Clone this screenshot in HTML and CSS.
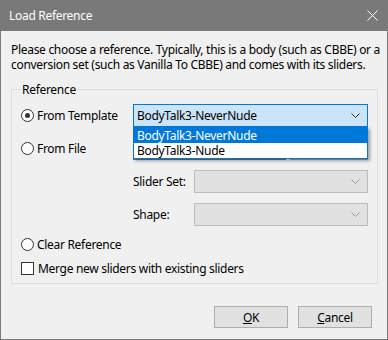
FILE: index.html
```html
<!DOCTYPE html>
<html lang="en">
<head>
  <meta charset="UTF-8" />
  <title>Load Reference</title>
  <link rel="stylesheet" href="styles.css">
</head>
<body>
  <div class="dialog">
    <div class="titlebar">
      <span class="title">Load Reference</span>
      <svg class="close" width="11" height="11" viewBox="0 0 11 11">
        <path d="M0.5 0.5 L10.5 10.5 M10.5 0.5 L0.5 10.5" stroke="#fff" stroke-width="1" fill="none"/>
      </svg>
    </div>

    <div class="content">
      <p class="intro">Please choose a reference. Typically, this is a body (such as CBBE) or a<br>conversion set (such as Vanilla To CBBE) and comes with its sliders.</p>

      <fieldset class="group">
        <legend>Reference</legend>

        <div class="row">
          <label class="radio"><span class="dot checked"></span>From Template</label>
          <div class="combo active">
            <span>BodyTalk3-NeverNude</span>
            <svg class="chev" width="9" height="5" viewBox="0 0 9 5"><path d="M0.5 0.5 L4.5 4.5 L8.5 0.5" stroke="#333" fill="none"/></svg>
            <ul class="droplist">
              <li class="sel">BodyTalk3-NeverNude</li>
              <li>BodyTalk3-Nude</li>
            </ul>
          </div>
        </div>

        <div class="row">
          <label class="radio"><span class="dot"></span>From File</label>
          <div class="file">
            <div class="file-input"></div>
            <div class="file-btn"></div>
          </div>
        </div>

        <div class="row sub">
          <span class="sublabel">Slider Set:</span>
          <div class="combo disabled">
            <svg class="chev" width="9" height="5" viewBox="0 0 9 5"><path d="M0.5 0.5 L4.5 4.5 L8.5 0.5" stroke="#999" fill="none"/></svg>
          </div>
        </div>

        <div class="row sub">
          <span class="sublabel">Shape:</span>
          <div class="combo disabled">
            <svg class="chev" width="9" height="5" viewBox="0 0 9 5"><path d="M0.5 0.5 L4.5 4.5 L8.5 0.5" stroke="#999" fill="none"/></svg>
          </div>
        </div>

        <div class="row small">
          <label class="radio"><span class="dot"></span>Clear Reference</label>
        </div>

        <div class="row check">
          <label class="radio"><span class="box"></span>Merge new sliders with existing sliders</label>
        </div>
      </fieldset>

      <div class="buttons">
        <button class="btn"><u>O</u>K</button>
        <button class="btn"><u>C</u>ancel</button>
      </div>
    </div>
  </div>
</body>
</html>
```

FILE: styles.css
```css
body { margin: 0; background: #fff; font-family: "Noto Sans", sans-serif; font-size: 12px; letter-spacing: -0.3px; color: #000; }

.dialog { width: 388px; height: 340px; box-sizing: border-box; border: 1px solid #7a7a7a; border-top: none; background: #f0f0f0; display: flex; flex-direction: column; }

.titlebar { height: 31px; margin: 0 -1px; background: #797979; display: flex; align-items: center; justify-content: space-between; padding: 0 10px 0 9px; color: #fff; }
.title { font-size: 12px; }
.close { display: block; margin-top: -1px; }

.content { padding: 0 10px; flex: 1; display: flex; flex-direction: column; }
.intro { margin: 11px 0 0; line-height: 15px; white-space: nowrap; }

.group { margin: 10px 0 0; border: 1px solid #dcdcdc; padding: 0 9px 8px; display: flex; flex-direction: column; gap: 10px; }
.group legend { padding: 0 1px; line-height: 15px; }

.row { display: flex; align-items: center; height: 23px; }
.row:first-of-type { margin-top: 7px; }
.row.sub { padding-left: 112px; }
.row.small { height: 16px; }
.row.check { height: 14px; margin-top: -1px; }

.radio { display: flex; align-items: center; width: 112px; white-space: nowrap; }
.dot { width: 11px; height: 11px; border: 1px solid #333; border-radius: 50%; background: #fff; margin-right: 3px; position: relative; flex: none; }
.dot.checked::after { content: ""; position: absolute; left: 3px; top: 3px; width: 5px; height: 5px; border-radius: 50%; background: #333; }
.box { width: 11px; height: 11px; border: 1px solid #333; background: #fff; margin-right: 4px; flex: none; }

.combo { width: 235px; height: 23px; box-sizing: border-box; border: 1px solid #adadad; display: flex; align-items: center; justify-content: space-between; padding: 0 7px 0 3px; position: relative; }
.combo.active { background: #cce4f7; border-color: #0078d7; }
.combo.disabled { width: 174px; background: #e1e1e1; border-color: #bcbcbc; margin-left: auto; }
.chev { display: block; margin-left: auto; }

.sublabel { width: 61px; }

.droplist { list-style: none; margin: 0; padding: 0; position: absolute; left: -1px; top: 22px; width: 235px; box-sizing: border-box; border: 1px solid #0078d7; background: #fff; box-shadow: 2px 2px 3px rgba(0, 0, 0, 0.35); z-index: 2; }
.droplist li { height: 15px; line-height: 15px; padding-left: 3px; }
.droplist li.sel { background: #0078d7; color: #fff; }

.file { display: flex; gap: 4px; width: 235px; height: 23px; }
.file-input { flex: 1; border: 1px solid #7a7a7a; background: #fff; }
.file-btn { width: 76px; border: 1px solid #adadad; background: #e1e1e1; }

.buttons { display: flex; justify-content: flex-end; gap: 10px; margin-top: 22px; padding-right: 5px; }
.btn { width: 74px; height: 22px; border: 1px solid #adadad; background: #e1e1e1; font-family: inherit; font-size: 12px; letter-spacing: inherit; color: #000; padding: 0; }
```
